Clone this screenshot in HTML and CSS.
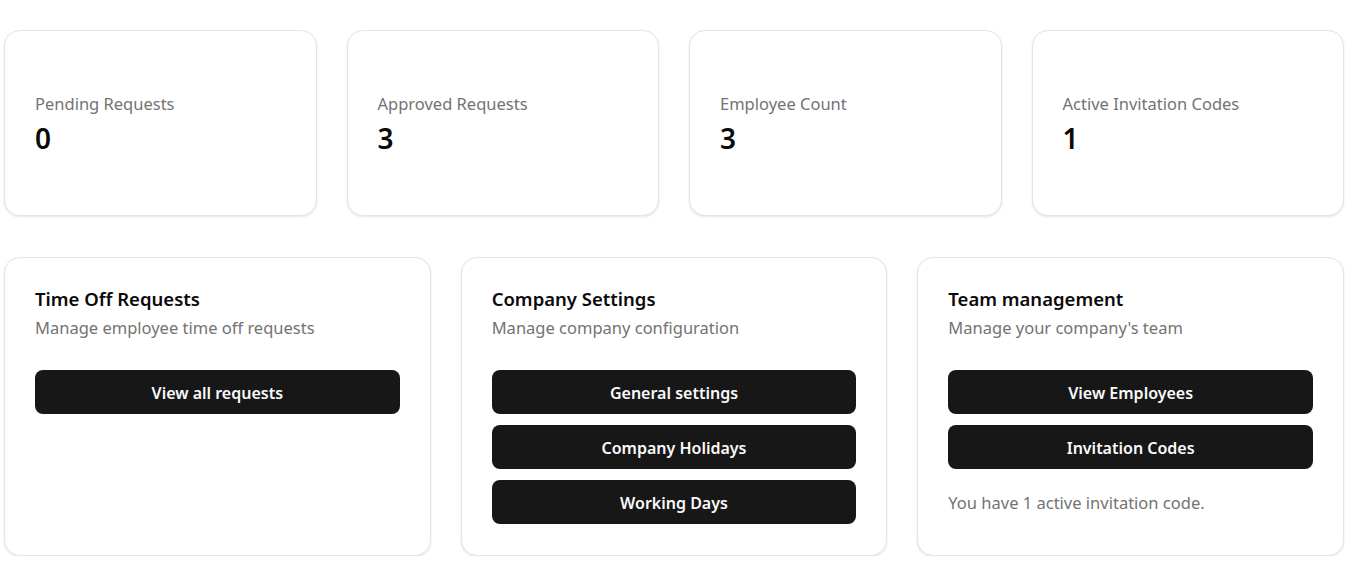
FILE: index.html
```
<!DOCTYPE html>
<html lang="en">
<head>
<meta charset="utf-8">
<title>Dashboard</title>
<link rel="stylesheet" href="styles.css">
</head>
<body>
<main class="page">
  <section class="stats">
    <div class="card stat">
      <div class="stat-label">Pending Requests</div>
      <div class="stat-value">0</div>
    </div>
    <div class="card stat">
      <div class="stat-label">Approved Requests</div>
      <div class="stat-value">3</div>
    </div>
    <div class="card stat">
      <div class="stat-label">Employee Count</div>
      <div class="stat-value">3</div>
    </div>
    <div class="card stat">
      <div class="stat-label">Active Invitation Codes</div>
      <div class="stat-value">1</div>
    </div>
  </section>
  <section class="panels">
    <div class="card panel">
      <h2 class="panel-title">Time Off Requests</h2>
      <p class="panel-desc">Manage employee time off requests</p>
      <div class="actions">
        <button class="btn">View all requests</button>
      </div>
    </div>
    <div class="card panel">
      <h2 class="panel-title">Company Settings</h2>
      <p class="panel-desc">Manage company configuration</p>
      <div class="actions">
        <button class="btn">General settings</button>
        <button class="btn">Company Holidays</button>
        <button class="btn">Working Days</button>
      </div>
    </div>
    <div class="card panel">
      <h2 class="panel-title">Team management</h2>
      <p class="panel-desc">Manage your company's team</p>
      <div class="actions">
        <button class="btn">View Employees</button>
        <button class="btn">Invitation Codes</button>
      </div>
      <p class="note">You have 1 active invitation code.</p>
    </div>
  </section>
</main>
</body>
</html>
```
FILE: styles.css
```
* { box-sizing: border-box; }
html, body { margin: 0; padding: 0; background: #ffffff; }
body {
  font-family: "Noto Sans", "Open Sans", sans-serif;
  color: #0a0a0a;
}
.page {
  width: 1340px;
  margin: 30px 0 0 4px;
}
.card {
  background: #ffffff;
  border: 1px solid #e5e5e5;
  border-radius: 16px;
  box-shadow: 0 1px 3px rgba(0,0,0,0.08), 0 1px 2px rgba(0,0,0,0.04);
}
.stats {
  display: grid;
  grid-template-columns: repeat(4, 1fr);
  gap: 30px;
}
.stat {
  height: 186px;
  padding: 61px 30px 0;
}
.stat-label {
  font-size: 16.5px;
  line-height: 24px;
  color: #737373;
}
.stat-value {
  margin-top: 4px;
  font-size: 28px;
  line-height: 36px;
  font-weight: 600;
  color: #0a0a0a;
}
.panels {
  display: grid;
  grid-template-columns: repeat(3, 1fr);
  gap: 30px;
  margin-top: 41px;
}
.panel {
  padding: 29px 30px 31px;
}
.panel-title {
  margin: 0;
  font-size: 18.5px;
  line-height: 24px;
  font-weight: 600;
}
.panel-desc {
  margin: 5px 0 0;
  font-size: 16.5px;
  line-height: 24px;
  color: #737373;
}
.actions {
  display: flex;
  flex-direction: column;
  gap: 11px;
  margin-top: 30px;
}
.btn {
  height: 44px;
  border: 0;
  border-radius: 8px;
  background: #171717;
  color: #fafafa;
  font-family: inherit;
  font-size: 16px;
  font-weight: 600;
  padding: 1px 0 0;
  cursor: pointer;
}
.note {
  margin: 22px 0 0;
  font-size: 16.5px;
  line-height: 24px;
  color: #737373;
}
```
